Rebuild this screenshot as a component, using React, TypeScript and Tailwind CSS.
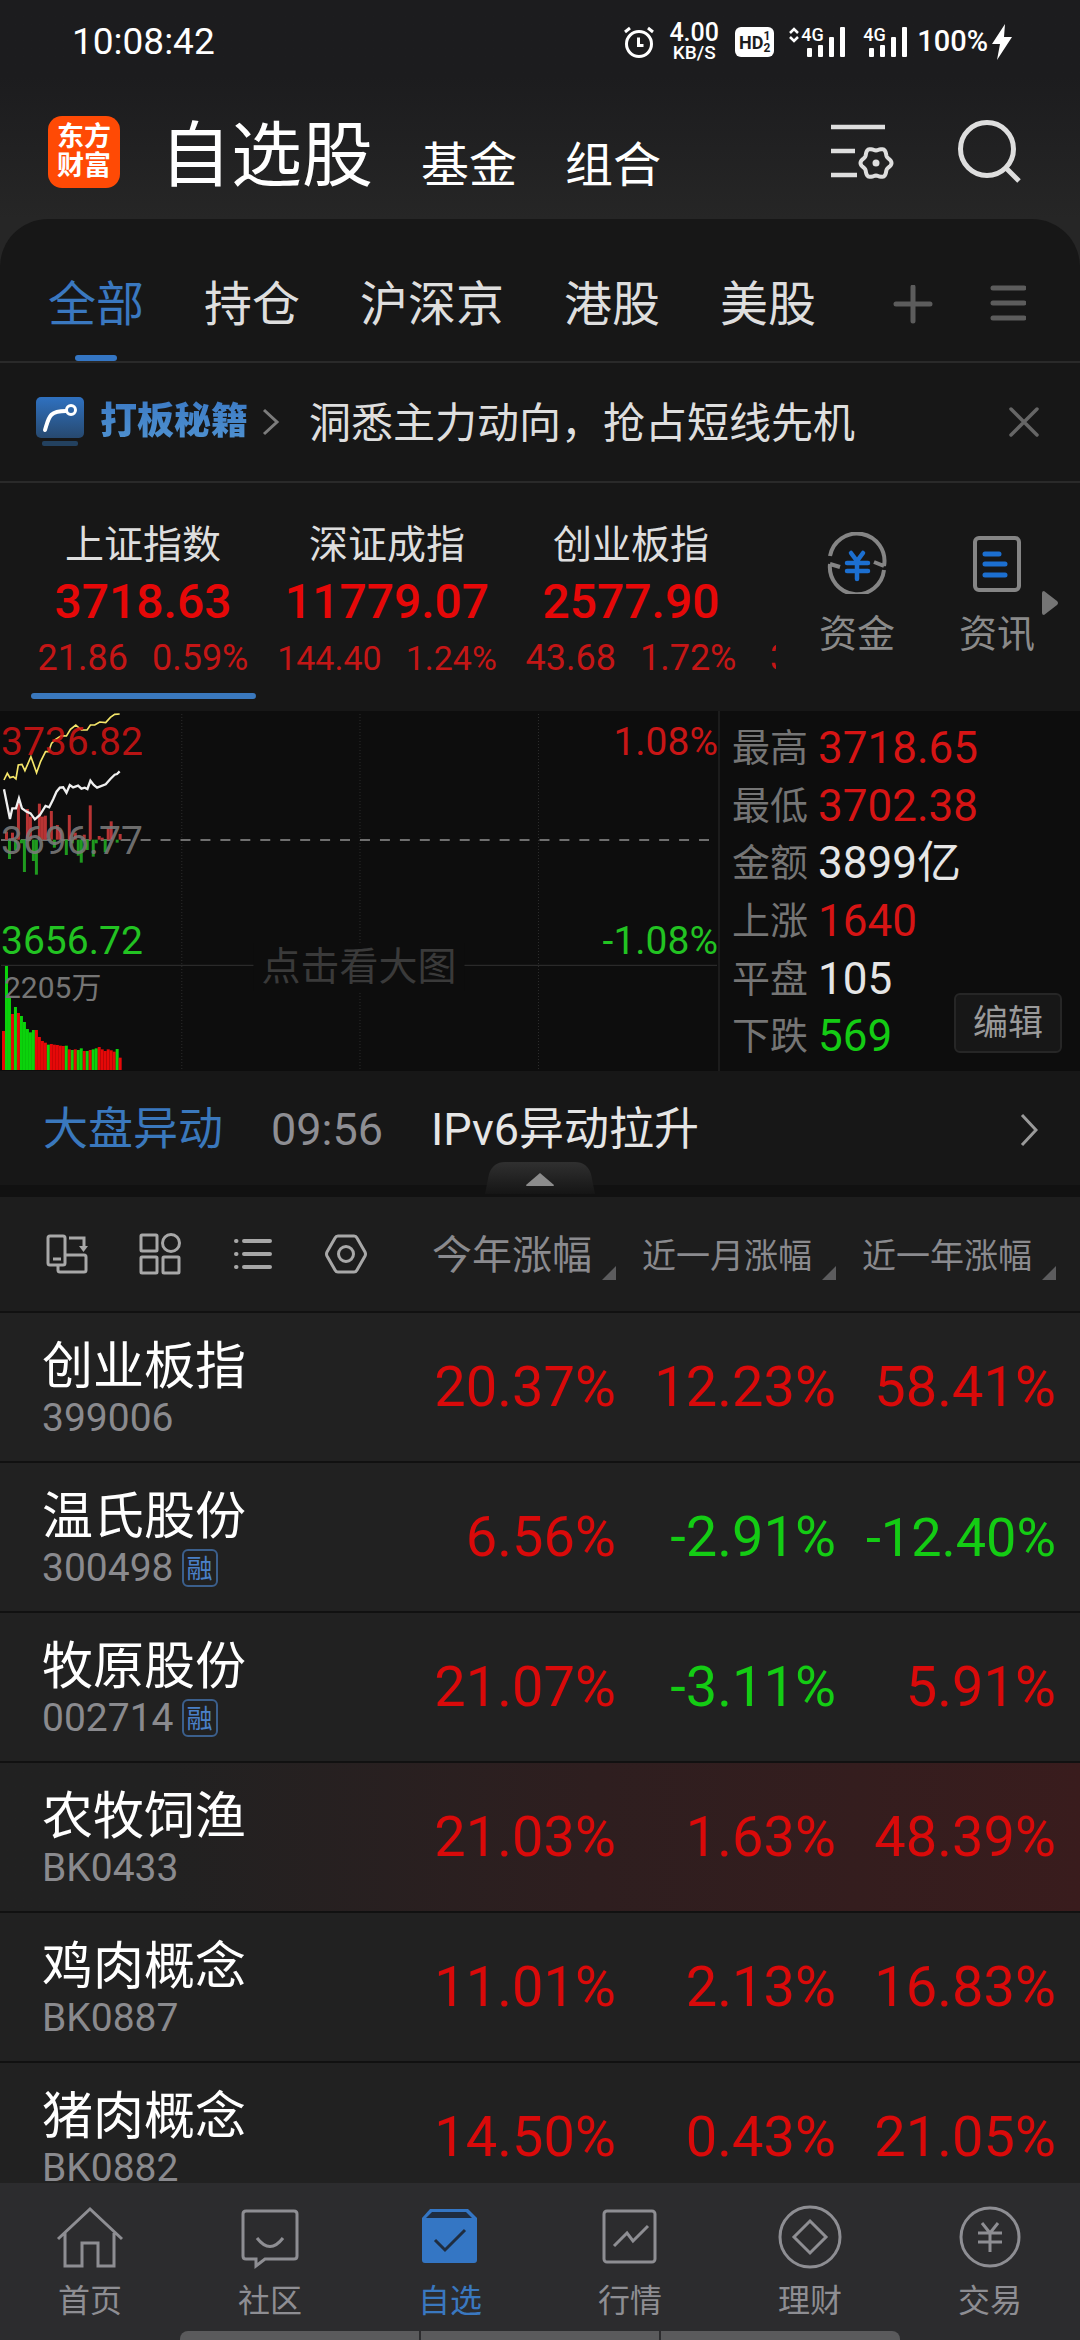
const RED = "#e60808";
const GREEN = "#0bd20b";

const tabs = ["全部", "持仓", "沪深京", "港股", "美股"];

const indices = [
  { name: "上证指数", value: "3718.63", change: "21.86", pct: "0.59%", size: "text-[36px]", active: true },
  { name: "深证成指", value: "11779.07", change: "144.40", pct: "1.24%", size: "text-[34px]" },
  { name: "创业板指", value: "2577.90", change: "43.68", pct: "1.72%", size: "text-[36px]" },
];

const stats = [
  { label: "最高", value: "3718.65", color: "text-[#d61414]" },
  { label: "最低", value: "3702.38", color: "text-[#d61414]" },
  { label: "金额", value: "3899亿", color: "text-[#e6e6e6]" },
  { label: "上涨", value: "1640", color: "text-[#d61414]" },
  { label: "平盘", value: "105", color: "text-[#e6e6e6]" },
  { label: "下跌", value: "569", color: "text-[#14cc14]" },
];

const columns = [
  { label: "今年涨幅", size: "text-[40px]" },
  { label: "近一月涨幅", size: "text-[34px]" },
  { label: "近一年涨幅", size: "text-[34px]" },
];

const stocks = [
  { name: "创业板指", code: "399006", values: ["20.37%", "12.23%", "58.41%"] },
  { name: "温氏股份", code: "300498", margin: true, values: ["6.56%", "-2.91%", "-12.40%"] },
  { name: "牧原股份", code: "002714", margin: true, values: ["21.07%", "-3.11%", "5.91%"] },
  { name: "农牧饲渔", code: "BK0433", flash: true, values: ["21.03%", "1.63%", "48.39%"] },
  { name: "鸡肉概念", code: "BK0887", values: ["11.01%", "2.13%", "16.83%"] },
  { name: "猪肉概念", code: "BK0882", values: ["14.50%", "0.43%", "21.05%"] },
];

// [minute, y of the bar's free end]
const momentum = [
  [1, 395], [3, 398], [5, 310], [8, 327], [9, 350], [12, 311], [13, 350], [14, 347], [16, 333],
  [18, 375], [19, 390], [22, 345], [24, 398], [27, 404], [29, 316], [32, 408], [33, 413],
  [35, 385], [36, 364], [39, 402], [2, 477], [4, 450], [6, 430], [7, 516], [10, 483], [11, 524],
  [17, 443], [21, 465], [23, 430], [25, 467], [26, 488], [28, 450], [30, 470], [31, 430],
  [34, 457], [38, 428],
];

const volume =
  "r993 g798 g890 r942 g921 r939 g948 g966 g987 g997 g990 r990 r1011 r1023 r1028 g1034 r1032 r1034 r1035 r1037 r1038 g1037 r1048 g1050 r1048 g1050 g1045 r1053 g1053 r1050 g1048 g1045 r1041 r1048 r1053 r1048 r1051 r1055 g1047 r1073".split(
    " "
  );

const averageLine =
  "12,240 22,220 30,233 40,230 48,237 55,195 66,193 75,212 93,170 110,218 122,185 137,155 146,155 155,130 165,120 185,107 200,108 212,88 228,75 245,90 262,90 272,75 285,75 300,66 318,68 332,52 345,43 360,42";
const priceLine =
  "12,268 30,357 37,325 48,325 57,295 66,325 80,335 92,340 105,358 120,345 137,318 148,322 160,298 170,275 180,263 190,262 200,278 210,255 220,262 235,257 245,266 255,263 263,267 272,242 282,255 292,263 318,253 332,237 345,224 352,222 360,214";

const gearPoints = Array.from({ length: 72 }, (_, i) => {
  const a = (i / 72) * Math.PI * 2;
  const r = 14 + 1.5 * Math.cos(6 * a);
  return `${(45 + r * Math.cos(a)).toFixed(2)},${(39 + r * Math.sin(a)).toFixed(2)}`;
}).join(" ");

function Signal({ data }: { data?: boolean }) {
  return (
    <div className="relative h-[30px] w-[58px]">
      <svg viewBox="0 0 58 30" className="h-full w-full" fill="#fff">
        <rect x="18" y="21" width="5" height="9" rx="1" />
        <rect x="29" y="18" width="5" height="12" rx="1" />
        <rect x="40" y="10" width="5" height="20" rx="1" />
        <rect x="51" y="0" width="5" height="30" rx="1" />
        {data && <path d="M1 6l4-4 4 4M1 10l4 4 4-4" fill="none" stroke="#fff" strokeWidth="2.5" />}
      </svg>
      <span className="absolute left-3 top-0 text-[18px] font-medium leading-4">4G</span>
    </div>
  );
}

function StatusBar() {
  return (
    <div className="flex h-[84px] items-center justify-between pl-[72px] pr-[68px] text-white">
      <span className="text-[37px]">10:08:42</span>
      <div className="flex items-center">
        <svg viewBox="0 0 30 32" className="h-8 w-[30px]" fill="none" stroke="#fff" strokeWidth="3">
          <circle cx="15" cy="18" r="12.5" />
          <path d="M14.500 11.500v8h5M1 6l5-4M29 6l-5-4" />
        </svg>
        <div className="ml-[14px] flex w-[52px] flex-col items-center font-medium">
          <span className="text-[25px] leading-[22px]">4.00</span>
          <span className="text-[19px] leading-[18px]">KB/S</span>
        </div>
        <div className="ml-[15px] flex h-[30px] w-[39px] items-center justify-center rounded-md bg-white text-[#1c1c1e]">
          <span className="text-[18px] font-bold">HD</span>
          <span className="flex flex-col text-[12px] font-bold leading-3">
            <span>1</span>
            <span>2</span>
          </span>
        </div>
        <div className="ml-[15px] flex gap-1">
          <Signal data />
          <Signal />
        </div>
        <span className="ml-2 text-[29px] font-medium">100%</span>
        <svg viewBox="0 0 20 36" className="ml-1 h-9 w-5" fill="#fff">
          <path d="M13 0L0 20h8L5 36 20 13h-8z" />
        </svg>
      </div>
    </div>
  );
}

function Header() {
  return (
    <header className="flex h-[135px] items-center pl-12 pr-14">
      <div className="flex h-[72px] w-[72px] flex-col items-center justify-center rounded-[14px] bg-[#ff4a05] text-[27px] font-bold leading-[29px] text-white">
        <span>东方</span>
        <span>财富</span>
      </div>
      <nav className="ml-10 flex items-end pt-2 text-white">
        <button className="text-[71px] leading-[80px]">自选股</button>
        <button className="ml-12 text-[48px] leading-[60px]">基金</button>
        <button className="ml-12 text-[48px] leading-[60px]">组合</button>
      </nav>
      <button aria-label="列表设置" className="ml-auto">
        <svg viewBox="0 0 64 56" className="h-14 w-16" fill="none" stroke="#dedede" strokeWidth="4.500">
          <path d="M0 3h54M0 27h24M0 51h26" />
          <polygon points={gearPoints} strokeWidth="4" />
          <circle cx="45" cy="39" r="3.500" fill="#dedede" stroke="none" />
        </svg>
      </button>
      <button aria-label="搜索" className="ml-[61px]">
        <svg viewBox="0 0 68 68" className="h-[68px] w-[68px]" fill="none" stroke="#dedede" strokeWidth="5">
          <circle cx="31" cy="31" r="26.500" />
          <path d="M50 50l13 13" />
        </svg>
      </button>
    </header>
  );
}

function GroupTabs() {
  return (
    <div className="flex h-[144px] items-center border-b-2 border-[#2a2a2a] pl-12 pr-[54px] pt-[30px] text-[48px] text-[#dedede]">
      <div className="flex h-full items-center gap-[60px]">
        {tabs.map((tab, i) =>
          i === 0 ? (
            <button key={tab} className="relative h-full text-[#3a78c0]">
              {tab}
              <span className="absolute bottom-0 left-[27px] h-[6px] w-[42px] rounded-full bg-[#3476c4]" />
            </button>
          ) : (
            <button key={tab}>{tab}</button>
          )
        )}
      </div>
      <button aria-label="添加分组" className="ml-auto">
        <svg viewBox="0 0 40 40" className="h-10 w-10" stroke="#5c5c5c" strokeWidth="5" strokeLinecap="round">
          <path d="M20 2v34M3 19h34" />
        </svg>
      </button>
      <button aria-label="管理分组" className="ml-[57px]">
        <svg viewBox="0 0 36 40" className="h-10 w-9" stroke="#5c5c5c" strokeWidth="5" strokeLinecap="round">
          <path d="M3 3h31M3 18h31M3 33h31" />
        </svg>
      </button>
    </div>
  );
}

function Promo() {
  return (
    <div className="flex h-[120px] items-center border-b-2 border-[#2a2a2a] pl-9 pr-10">
      <svg viewBox="0 0 48 50" className="h-[50px] w-12" fill="none">
        <defs>
          <linearGradient id="promo" x1="0" y1="0" x2="0" y2="1">
            <stop offset="0" stopColor="#2f71c0" />
            <stop offset="1" stopColor="#27496f" />
          </linearGradient>
        </defs>
        <rect width="48" height="41" rx="5" fill="url(#promo)" />
        <rect x="6" y="44" width="36" height="5" rx="2" fill="#23415f" />
        <path d="M9 33C13 20 13 14 30 14" stroke="#fff" strokeWidth="4" strokeLinecap="round" />
        <circle cx="35" cy="13" r="4.500" stroke="#fff" strokeWidth="3" />
      </svg>
      <span className="ml-4 bg-gradient-to-b from-[#3a78c4] to-[#5396d2] bg-clip-text text-[37px] font-black text-transparent">
        打板秘籍
      </span>
      <svg viewBox="0 0 18 28" className="ml-[14px] h-7 w-[18px]" fill="none" stroke="#7c7c7c" strokeWidth="3">
        <path d="M2 2l13 12L2 26" />
      </svg>
      <a href="#promo" className="ml-[29px] pt-[2px] text-[42px] text-[#dedede]">
        洞悉主力动向，抢占短线先机
      </a>
      <button aria-label="关闭" className="ml-auto">
        <svg viewBox="0 0 32 32" className="h-8 w-8" stroke="#666" strokeWidth="3.500" strokeLinecap="round">
          <path d="M3 3l26 26M29 3L3 29" />
        </svg>
      </button>
    </div>
  );
}

function IndexStrip() {
  return (
    <div className="flex h-[228px]">
      <div className="flex min-w-0 flex-1 overflow-hidden pl-[21px] pt-9">
        {indices.map((item) => (
          <button key={item.name} className="relative flex w-[244px] shrink-0 flex-col items-center">
            <span className="text-[39px] leading-[52px] text-[#dedede]">{item.name}</span>
            <span className="text-[48px] font-medium leading-[62px] text-[#e60808]">{item.value}</span>
            <span className={`flex gap-6 leading-[50px] text-[#c41616] ${item.size}`}>
              <span>{item.change}</span>
              <span>{item.pct}</span>
            </span>
            {item.active && (
              <span className="absolute bottom-3 left-[10px] h-[6px] w-[225px] rounded-full bg-[#3a78bd]" />
            )}
          </button>
        ))}
        <span className="shrink-0 pl-[17px] pt-[114px] text-[36px] leading-[50px] text-[#c41616]">3</span>
      </div>
      <div className="relative flex w-[304px] pl-[11px] pt-[49px] text-[38px] text-[#8a8a8a]">
        <button className="flex w-[140px] flex-col items-center gap-4">
          <svg viewBox="0 0 60 62" className="h-[62px] w-[60px]" fill="none" stroke="#858585" strokeWidth="4">
            <path d="M3 24A27 27 0 0 1 57 34M57 34l-10-4M57 38A27 27 0 0 1 3 32M3 32l10 3" />
            <path
              d="M24 21l6 8 6-8M20 31h21M20 39h21M30 29v18"
              stroke="#1c6fd0"
              strokeWidth="4.500"
              strokeLinecap="round"
            />
          </svg>
          <span className="leading-[48px]">资金</span>
        </button>
        <button className="flex w-[140px] flex-col items-center gap-4">
          <svg viewBox="0 0 60 62" className="h-[62px] w-[60px]" fill="none" stroke="#858585" strokeWidth="4">
            <rect x="8" y="6" width="44" height="52" rx="4" />
            <path d="M18 22h14M18 32h20M18 43h20" stroke="#1c6fd0" strokeWidth="5" strokeLinecap="round" />
          </svg>
          <span className="leading-[48px]">资讯</span>
        </button>
        <svg viewBox="0 0 16 24" className="absolute right-[22px] top-[108px] h-6 w-4" fill="#757575">
          <path d="M2 0Q0 0 0 2v20q0 2 2 2l13-10q2-2 0-4z" />
        </svg>
      </div>
    </div>
  );
}

function Chart() {
  return (
    <div className="relative w-2/3 border-r-2 border-[#1c1c1c] text-[39px] leading-10">
      <svg viewBox="0 33 2160 1080" preserveAspectRatio="none" className="absolute inset-0 h-full w-full" fill="none">
        <path d="M547 42V1110M1083 42V1110M1620 42V1110" stroke="#2c2c2c" strokeWidth="3" strokeDasharray="3 6" />
        <path d="M3 796H2157" stroke="#2a2a2a" strokeWidth="4" />
        <path d="M3 420H2157" stroke="#909090" strokeWidth="5" strokeDasharray="30 30" />
        {momentum.map(([i, y]) => (
          <rect
            key={i}
            x={6 + i * 9}
            y={Math.min(y, 419)}
            width="9"
            height={Math.abs(y - 419)}
            fill={y < 419 ? "#b83434" : "#1f9a1f"}
          />
        ))}
        {volume.map((bar, i) => {
          const y = Number(bar.slice(1));
          return (
            <rect key={i} x={6 + i * 9} y={y} width="9" height={1110 - y} fill={bar[0] === "r" ? RED : GREEN} />
          );
        })}
        <polyline points={averageLine} stroke="#f5e66a" strokeWidth="5" />
        <polyline points={priceLine} stroke="#efefef" strokeWidth="7" />
      </svg>
      <span className="absolute left-px top-[11px] text-[#d01414]/90">3736.82</span>
      <span className="absolute left-px top-[110px] text-[#7a7a7a]/90">3696.77</span>
      <span className="absolute left-px top-[210px] text-[#22c322]">3656.72</span>
      <span className="absolute right-0 top-[11px] text-[#c81616]">1.08%</span>
      <span className="absolute right-0 top-[210px] text-[#22c322]">-1.08%</span>
      <span className="absolute left-1 top-[257px] text-[30px] text-[#757575]">2205万</span>
      <button className="absolute left-1/2 top-[232px] -translate-x-1/2 whitespace-nowrap bg-[#0d0d0d] px-2 leading-[48px] text-[#3a3a3a]">
        点击看大图
      </button>
    </div>
  );
}

function Market() {
  return (
    <div className="flex h-[360px] bg-[#0d0d0d]">
      <Chart />
      <dl className="relative flex flex-1 flex-col pb-[6px] pl-3 pt-2">
        {stats.map((s) => (
          <div key={s.label} className="flex flex-1 items-center gap-[10px]">
            <dt className="text-[38px] leading-10 text-[#757575]">{s.label}</dt>
            <dd className={`text-[44px] leading-[50px] ${s.color}`}>{s.value}</dd>
          </div>
        ))}
        <button className="absolute bottom-[18px] right-[18px] h-[60px] w-[108px] rounded-md border-2 border-[#262626] bg-[#171717] pt-[2px] text-[35px] text-[#9a9a9a]">
          编辑
        </button>
      </dl>
    </div>
  );
}

function Mover() {
  return (
    <div className="relative border-b-[12px] border-[#111]">
      <a href="#mover" className="flex h-[114px] items-center pl-[43px] pr-[42px] pt-1 text-[45px]">
        <span className="text-[#3a78bd]">大盘异动</span>
        <span className="ml-12 text-[#8e8e93]">09:56</span>
        <span className="ml-12 text-[#e6e6e6]">IPv6异动拉升</span>
        <svg viewBox="0 0 18 34" className="ml-auto h-[34px] w-[18px]" fill="none" stroke="#9a9a9a" strokeWidth="3">
          <path d="M2 2l14 15L2 32" />
        </svg>
      </a>
      <button aria-label="收起" className="absolute -bottom-[9px] left-1/2 -translate-x-1/2">
        <svg viewBox="0 0 110 32" className="h-8 w-[110px]">
          <defs>
            <linearGradient id="handle" x1="0" y1="0" x2="0" y2="1">
              <stop offset="0" stopColor="#303030" />
              <stop offset="1" stopColor="#151515" />
            </linearGradient>
          </defs>
          <path d="M0 32L4 12Q8 0 20 0h70q12 0 16 12l4 20z" fill="url(#handle)" />
          <path d="M55 11l14 12q0 1-1 1H42q-1 0-1-1z" fill="#8c8c8c" />
        </svg>
      </button>
    </div>
  );
}

function ViewButtons() {
  return (
    <div className="flex gap-[51px] pl-[46px]">
      <button aria-label="横屏">
        <svg viewBox="0 0 42 42" className="h-[42px] w-[42px]" fill="none" stroke="#a8a8a8" strokeWidth="3">
          <rect x="2" y="3" width="17" height="29" rx="2" />
          <path d="M7 26h8" />
          <path d="M23 5h15v9" />
          <path d="M33 13h9l-4.500 6z" fill="#a8a8a8" stroke="none" />
          <path d="M19 22h19q2 0 2 2v13q0 2-2 2H14q-2 0-2-2v-5" />
        </svg>
      </button>
      <button aria-label="宫格">
        <svg viewBox="0 0 42 42" className="h-[42px] w-[42px]" fill="none" stroke="#a8a8a8" strokeWidth="3">
          <rect x="2" y="2" width="16" height="16" rx="1" />
          <circle cx="32" cy="10" r="8.500" />
          <rect x="2" y="24" width="16" height="16" rx="1" />
          <rect x="24" y="24" width="16" height="16" rx="1" />
        </svg>
      </button>
      <button aria-label="列表">
        <svg viewBox="0 0 42 42" className="h-[42px] w-[42px]" fill="none" stroke="#a8a8a8" strokeWidth="4" strokeLinecap="round">
          <path d="M12 8h26M12 21h26M12 34h26M4 8h.5M4 21h.5M4 34h.5" />
        </svg>
      </button>
      <button aria-label="设置">
        <svg viewBox="0 0 42 42" className="h-[42px] w-[42px]" fill="none" stroke="#a8a8a8" strokeWidth="3">
          <path d="M13 3h16q2 0 3 2l8 14q1 2 0 4l-8 14q-1 2-3 2H13q-2 0-3-2L2 23q-1-2 0-4l8-14q1-2 3-2z" />
          <circle cx="21" cy="21" r="7.500" />
        </svg>
      </button>
    </div>
  );
}

function Watchlist() {
  return (
    <div className="min-h-0 flex-1 overflow-hidden bg-[#212121]">
      <table className="w-full table-fixed border-separate border-spacing-0">
        <thead className="bg-[#1d1d1d] text-[#8a8a8e]">
          <tr>
            <th className="h-[114px] p-0 align-middle">
              <ViewButtons />
            </th>
            {columns.map((c, i) => (
              <th
                key={c.label}
                scope="col"
                className={i === 2 ? "w-[244px] p-0 pr-6 font-normal" : "w-[220px] p-0 font-normal"}
              >
                <button className="flex w-full items-center justify-end gap-[10px] whitespace-nowrap pt-1">
                  <span className={`${c.size} leading-[48px]`}>{c.label}</span>
                  <svg viewBox="0 0 14 14" className="h-[14px] w-[14px] self-end" fill="#5c5c5e">
                    <path d="M14 0v14H0z" />
                  </svg>
                </button>
              </th>
            ))}
          </tr>
        </thead>
        <tbody>
          {stocks.map((s) => (
            <tr
              key={s.name}
              className={s.flash ? "bg-gradient-to-r from-[#212121] from-15% via-[#2e1e1f] via-55% to-[#391c1d]" : ""}
            >
              <td className="h-[150px] border-t-2 border-[#111] p-0 pl-[42px] pt-2">
                <div className="text-[51px] leading-[54px] text-white">{s.name}</div>
                <div className="flex items-center gap-2 text-[39px] leading-[48px] text-[#8a8a8e]">
                  {s.code}
                  {s.margin && (
                    <span className="h-[38px] w-9 rounded-md border-2 border-[#3b5f8c] text-center text-[26px] leading-[36px] text-[#4a80c8]">
                      融
                    </span>
                  )}
                </div>
              </td>
              {s.values.map((v, i) => (
                <td
                  key={i}
                  className={`border-t-2 border-[#111] p-0 text-right ${i === 2 ? "pr-6" : ""} ${
                    v.length > 6 ? "text-[54px]" : "text-[56px]"
                  } ${v.startsWith("-") ? "text-[#14cc14]" : "text-[#d90a0a]"}`}
                >
                  {v}
                </td>
              ))}
            </tr>
          ))}
        </tbody>
      </table>
    </div>
  );
}

const navItems = [
  {
    label: "首页",
    icon: <path d="M-2 32L30 2l32 30M5 26v33h17V36h16v23h16V26" />,
  },
  {
    label: "社区",
    icon: (
      <>
        <path d="M6 4h48q3 0 3 3v42q0 3-3 3H25l-9 7v-7H6q-3 0-3-3V7q0-3 3-3z" />
        <path d="M17 31q13 17 26 0" />
      </>
    ),
  },
  {
    label: "自选",
    active: true,
    icon: (
      <>
        <path d="M10 2h38l9 9v42q0 3-3 3H5q-3 0-3-3V11z" fill="#3476c4" stroke="none" />
        <path d="M12 5h34l6 6H6z" fill="#1f2d40" stroke="none" />
        <path d="M15 33l10 10 20-20" stroke="#1f2d40" strokeWidth="3" />
      </>
    ),
  },
  {
    label: "行情",
    icon: (
      <>
        <rect x="4" y="4" width="51" height="51" rx="3" />
        <path d="M14 39l13-13 6 8 15-15" />
      </>
    ),
  },
  {
    label: "理财",
    icon: (
      <>
        <circle cx="30" cy="30" r="30" />
        <path d="M30 14l16 16-16 16-16-16z" />
      </>
    ),
  },
  {
    label: "交易",
    icon: (
      <>
        <circle cx="30" cy="30" r="29" />
        <path d="M22 16l8 10 8-10M18 26h24M18 35h24M30 26v19" />
      </>
    ),
  },
];

function BottomNav() {
  return (
    <nav className="bg-[#2c2c2e]">
      <div className="grid h-[148px] grid-cols-6 pt-6">
        {navItems.map((item) => (
          <button
            key={item.label}
            className={`flex flex-col items-center gap-[18px] text-[32px] leading-8 ${
              item.active ? "text-[#3a78c0]" : "text-[#8e8e93]"
            }`}
          >
            <svg
              viewBox="0 0 60 60"
              className="h-[60px] w-[60px] overflow-visible"
              fill="none"
              stroke="currentColor"
              strokeWidth="3"
            >
              {item.icon}
            </svg>
            {item.label}
          </button>
        ))}
      </div>
      <div className="mx-auto grid h-[9px] w-2/3 grid-cols-3 gap-[2px] overflow-hidden rounded-t-lg">
        <span className="bg-[#5a5a5c]" />
        <span className="bg-[#5a5a5c]" />
        <span className="bg-[#5a5a5c]" />
      </div>
    </nav>
  );
}

export default function App() {
  return (
    <div className="flex h-screen flex-col overflow-hidden bg-[#262626] font-['Roboto','Noto_Sans_CJK_SC',sans-serif]">
      <div className="bg-gradient-to-b from-[#1c1c1e] from-35% to-[#262626]">
        <StatusBar />
        <Header />
      </div>
      <main className="flex min-h-0 flex-1 flex-col rounded-t-[48px] bg-[#171717]">
        <GroupTabs />
        <Promo />
        <IndexStrip />
        <Market />
        <Mover />
        <Watchlist />
      </main>
      <BottomNav />
    </div>
  );
}
